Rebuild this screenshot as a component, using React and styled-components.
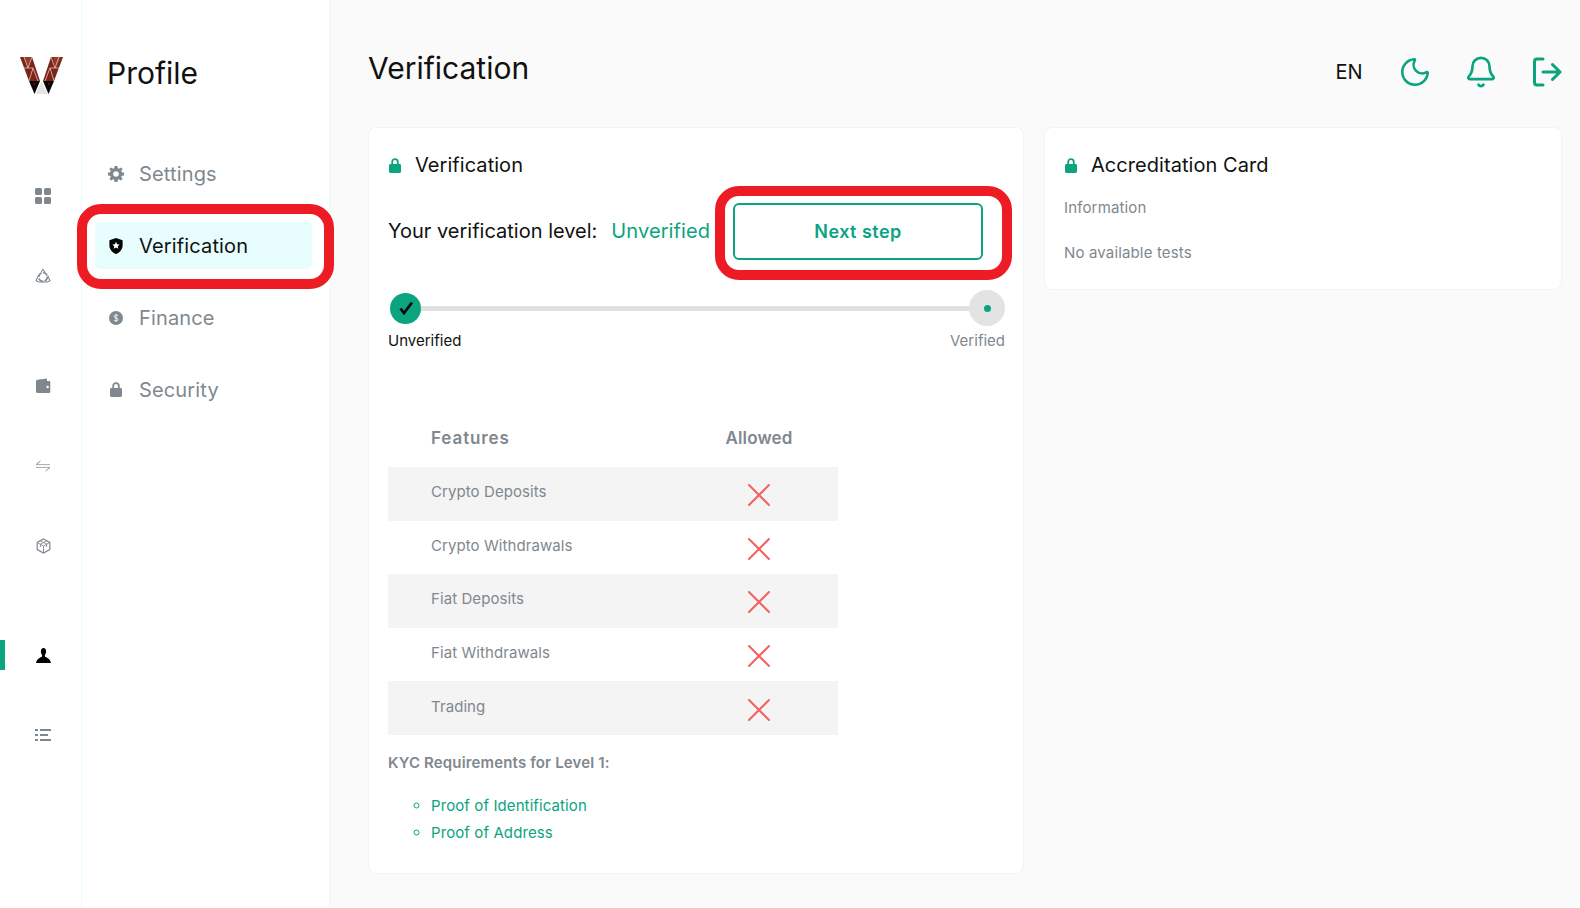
import React from 'react';
import styled, { createGlobalStyle } from 'styled-components';
import { Moon, Bell, X } from 'lucide-react';

const GREEN = '#0ba47f';
const GREY = '#80888f';
const RED = '#ed1c24';
const EDGE = '#e9fbfa';

const GlobalStyle = createGlobalStyle`
  html, body {
    margin: 0;
    padding: 0;
    height: 100%;
    overflow: hidden;
    background: #fafafa;
    font-family: Inter, "Noto Sans", Arial, sans-serif;
    color: #111;
  }
  * { box-sizing: border-box; }
`;

const Page = styled.div`
  display: flex;
  height: 908px;
  width: 1580px;
`;

const Rail = styled.aside`
  flex: 0 0 82px;
  background: #fff;
  border-right: 1px solid ${EDGE};
  display: flex;
  flex-direction: column;
  padding-top: 57px;
`;

const LogoBox = styled.div`
  padding-left: 20px;
  height: 124px;
`;

const RailGroups = styled.div`
  display: flex;
  flex-direction: column;
  gap: 79.5px;
`;

const RailGroup = styled.div`
  display: flex;
  flex-direction: column;
  gap: 50px;
`;

const RailItem = styled.div`
  position: relative;
  height: 30px;
  display: flex;
  align-items: center;
  justify-content: center;
  padding-left: 5px;
  color: ${(p) => (p.$active ? '#000' : GREY)};

  ${(p) =>
    p.$active &&
    `&::before {
      content: '';
      position: absolute;
      left: 0;
      top: 0;
      bottom: 0;
      width: 5px;
      background: ${GREEN};
    }`}
`;

const SubNav = styled.nav`
  flex: 0 0 248px;
  background: #fff;
  border-right: 1px solid ${EDGE};
  padding: 53px 17px 0 13px;
`;

const SubNavTitle = styled.h2`
  margin: 0 0 57px 12px;
  font-size: 30px;
  line-height: 40px;
  font-weight: 400;
  color: #111;
`;

const Menu = styled.div`
  display: flex;
  flex-direction: column;
  gap: 25px;
`;

const MenuItem = styled.a`
  position: relative;
  height: 47px;
  display: flex;
  align-items: center;
  gap: 15px;
  padding-left: 13px;
  border-radius: 5px;
  font-size: 20px;
  letter-spacing: 0.15px;
  color: ${(p) => (p.$active ? '#111' : GREY)};
  background: ${(p) => (p.$active ? '#e8fdfd' : 'transparent')};
`;

const MenuIcon = styled.span`
  flex: 0 0 16px;
  height: 16px;
  display: flex;
  align-items: center;
  justify-content: center;
`;

const Callout = styled.span`
  position: absolute;
  top: ${(p) => p.$top}px;
  left: ${(p) => p.$left}px;
  right: ${(p) => p.$right}px;
  bottom: ${(p) => p.$bottom}px;
  border: 10px solid ${RED};
  border-radius: 24px;
  pointer-events: none;
`;

const Main = styled.main`
  flex: 1;
  min-width: 0;
  padding: 0 18px 0 38px;
`;

const Header = styled.header`
  height: 127px;
  display: flex;
  justify-content: space-between;
  align-items: flex-start;
`;

const PageTitle = styled.h1`
  margin: 48px 0 0;
  font-size: 30px;
  line-height: 40px;
  font-weight: 400;
  color: #111;
`;

const Actions = styled.div`
  margin: 55px -2px 0 0;
  display: flex;
  gap: 32px;
`;

const ActionSlot = styled.button`
  width: 34px;
  height: 34px;
  padding: 0;
  border: 0;
  background: none;
  display: flex;
  align-items: center;
  justify-content: center;
  font: inherit;
  font-size: 20px;
  color: ${(p) => (p.$text ? '#111' : GREEN)};
`;

const Cards = styled.div`
  display: grid;
  grid-template-columns: 656px 518px;
  gap: 20px;
  align-items: start;
`;

const Card = styled.section`
  background: #fff;
  border: 1px solid #f3f3f3;
  border-radius: 8px;
  padding: 25px 18px 27px 19px;
`;

const CardTitle = styled.h3`
  margin: 0;
  display: flex;
  align-items: center;
  gap: 14px;
  height: 24px;
  font-size: 20px;
  font-weight: 400;
  letter-spacing: 0.05px;
  color: #111;
`;

const TitleLock = styled.span`
  display: flex;
  margin-left: 1px;
  color: ${GREEN};
`;

const LevelRow = styled.div`
  margin-top: 26px;
  display: flex;
  align-items: center;
  height: 57px;
  font-size: 20px;
`;

const LevelText = styled.span`
  margin-top: -2px;
`;

const LevelValue = styled.span`
  margin: -2px 0 0 14px;
  letter-spacing: 0.1px;
  color: ${GREEN};
`;

const NextButton = styled.button`
  position: relative;
  margin-left: auto;
  margin-right: 22px;
  width: 250px;
  height: 57px;
  background: #fff;
  border: 2px solid ${GREEN};
  border-radius: 6px;
  font: inherit;
  font-size: 18px;
  font-weight: 600;
  letter-spacing: 0.45px;
  color: ${GREEN};
`;

const Track = styled.div`
  margin: 30px 0 0 2px;
  display: flex;
  align-items: center;
  height: 36px;
`;

const TrackBar = styled.div`
  flex: 1;
  height: 5px;
  background: #e0e0e0;
`;

const StepDone = styled.span`
  flex: 0 0 31px;
  height: 31px;
  border-radius: 50%;
  background: ${GREEN};
  display: flex;
  align-items: center;
  justify-content: center;
`;

const StepNext = styled.span`
  flex: 0 0 36px;
  height: 36px;
  border-radius: 50%;
  background: #e3e3e3;
  display: flex;
  align-items: center;
  justify-content: center;

  &::after {
    content: '';
    width: 7px;
    height: 7px;
    border-radius: 50%;
    background: ${GREEN};
  }
`;

const StepLabels = styled.div`
  margin-top: 6px;
  display: flex;
  justify-content: space-between;
  font-size: 15px;
  line-height: 18px;
`;

const StepLabel = styled.span`
  color: ${(p) => (p.$muted ? GREY : '#111')};
`;

const FeatureTable = styled.div`
  margin-top: 70px;
  width: 450px;
`;

const FeatureHead = styled.div`
  display: grid;
  grid-template-columns: 292px 158px;
  align-items: center;
  height: 47px;
  padding-bottom: 11px;
  font-size: 17px;
  font-weight: 600;
  color: ${GREY};
`;

const FeatureRow = styled.div`
  display: grid;
  grid-template-columns: 292px 158px;
  align-items: center;
  height: 53.6px;
  background: ${(p) => (p.$shaded ? '#f4f4f4' : '#fff')};
  font-size: 15px;
  letter-spacing: 0.08px;
  color: ${GREY};
`;

const FeatureName = styled.span`
  padding: 0 0 4px 43px;
`;

const HeadCell = styled.span`
  padding-left: ${(p) => (p.$center ? 0 : 43)}px;
  text-align: ${(p) => (p.$center ? 'center' : 'left')};
  letter-spacing: ${(p) => (p.$center ? 0.15 : 0.9)}px;
`;

const DeniedCell = styled.span`
  display: flex;
  justify-content: center;
  padding-top: 3px;
  color: #f4615f;
`;

const KycTitle = styled.div`
  margin-top: 19px;
  font-size: 15px;
  line-height: 18px;
  font-weight: 600;
  letter-spacing: 0.15px;
  color: ${GREY};
`;

const KycList = styled.ul`
  margin: 20px 0 0;
  padding-left: 43px;
  list-style: circle;
`;

const KycItem = styled.li`
  height: 27px;
  line-height: 27px;
  font-size: 15px;
  letter-spacing: 0.1px;
  color: ${GREEN};
`;

const InfoLine = styled.div`
  margin-top: ${(p) => p.$gap}px;
  font-size: 15px;
  line-height: 18px;
  letter-spacing: 0.15px;
  color: ${GREY};
`;

const Logo = () => (
  <svg width="43" height="37" viewBox="0 0 43 37">
    <polygon points="0,0 12,0 20,24 9,24" fill="#7c2418" />
    <polygon points="31,0 43,0 34,24 23,24" fill="#7c2418" />
    <polygon points="4,0 12,0 8,11" fill="#9c3a28" />
    <polygon points="33,0 41,0 36,11" fill="#9c3a28" />
    <polygon points="9,24 20,24 14.5,37" fill="#0a0506" />
    <polygon points="23,24 34,24 28.5,37" fill="#0a0506" />
    <polygon points="21.5,25 15.5,37 27.5,37" fill="#e4e4e4" />
    <path d="M8 11 L4 0 M8 11 L12 0 M3.5 11 H13 M13 11 L9 24 M13 11 L18 24 M35 11 L31 0 M35 11 L39 0 M30 11 H39.5 M30 11 L25 24 M30 11 L34 24" stroke="#e8d8d4" strokeWidth="0.7" fill="none" />
    <circle cx="14" cy="27" r="0.7" fill="#c22" />
    <circle cx="29" cy="27" r="0.7" fill="#c22" />
  </svg>
);

const GridIcon = () => (
  <svg width="16" height="16" viewBox="0 0 16 16" fill="currentColor">
    <rect x="0" y="0" width="7" height="7" rx="1.5" />
    <rect x="9" y="0" width="7" height="7" rx="1.5" />
    <rect x="0" y="9" width="7" height="7" rx="1.5" />
    <rect x="9" y="9" width="7" height="7" rx="1.5" />
  </svg>
);

const RecycleIcon = () => (
  <svg width="16" height="16" viewBox="0 0 16 16" fill="none" stroke="currentColor" strokeWidth="1.1">
    <path d="M6 4.5 L8 1.2 L10 4.5" />
    <path d="M12.6 7.5 L15 12.8 L11.5 14.2" />
    <path d="M3.4 7.5 L1 12.8 L4.5 14.2" />
    <path d="M4.5 14 H11.5" />
    <circle cx="8" cy="9" r="4.3" strokeWidth="1.6" strokeDasharray="5 1.6" />
  </svg>
);

const WalletIcon = () => (
  <svg width="16" height="16" viewBox="0 0 16 16">
    <path d="M1 3.5 C1 2.5 1.6 2 2.5 1.8 L12 0.6 V3 H14 C14.8 3 15.3 3.5 15.3 4.3 V13.5 C15.3 14.4 14.8 15 14 15 H2.5 C1.6 15 1 14.4 1 13.5 Z" fill="currentColor" />
    <circle cx="12.6" cy="9" r="1.2" fill="#fff" />
  </svg>
);

const TransferIcon = () => (
  <svg width="16" height="16" viewBox="0 0 16 16" fill="none" stroke="currentColor">
    <path d="M1 6.6 H15" strokeWidth="1" opacity="0.7" />
    <path d="M1 9.4 H15" strokeWidth="1" opacity="0.7" />
    <path d="M1 6.6 L5.5 2.8" strokeWidth="0.9" />
    <path d="M15 9.4 L10.5 13.2" strokeWidth="0.9" />
  </svg>
);

const CubeIcon = () => (
  <svg width="15" height="16" viewBox="0 0 15 16" fill="none" stroke="currentColor" strokeWidth="1.2">
    <path d="M7.5 1 L13.8 4.4 V11.6 L7.5 15 L1.2 11.6 V4.4 Z" />
    <path d="M1.2 4.4 L7.5 8 L13.8 4.4 M7.5 8 V15 M4.4 2.8 L10.6 6.2 V9 M10.6 2.8 L4.4 6.2 V9" strokeWidth="0.9" />
  </svg>
);

const PersonIcon = () => (
  <svg width="15" height="15" viewBox="0 0 15 15" fill="currentColor">
    <path d="M7.5 0 C9.2 0 10.1 1.4 10.1 3.2 C10.1 4.8 9.6 6 8.9 6.9 C8.7 7.7 8.9 8.5 9.7 9 C11.4 10 13.9 10.6 15 15 H0 C1.1 10.6 3.6 10 5.3 9 C6.1 8.5 6.3 7.7 6.1 6.9 C5.4 6 4.9 4.8 4.9 3.2 C4.9 1.4 5.8 0 7.5 0 Z" />
  </svg>
);

const ListIcon = () => (
  <svg width="16" height="14" viewBox="0 0 16 14" fill="currentColor">
    <rect x="0" y="1" width="3" height="2" />
    <rect x="5" y="1" width="11" height="2" />
    <rect x="0" y="6" width="3" height="2" />
    <rect x="5" y="6" width="8" height="2" />
    <rect x="0" y="11" width="3" height="2" />
    <rect x="5" y="11" width="11" height="2" />
  </svg>
);

const GearIcon = () => (
  <svg width="16" height="16" viewBox="0 0 16 16" fill="currentColor">
    <path
      fillRule="evenodd"
      d="M6.6 0 H9.4 L9.8 2.2 L11 2.7 L12.9 1.4 L14.6 3.1 L13.3 5 L13.8 6.2 L16 6.6 V9.4 L13.8 9.8 L13.3 11 L14.6 12.9 L12.9 14.6 L11 13.3 L9.8 13.8 L9.4 16 H6.6 L6.2 13.8 L5 13.3 L3.1 14.6 L1.4 12.9 L2.7 11 L2.2 9.8 L0 9.4 V6.6 L2.2 6.2 L2.7 5 L1.4 3.1 L3.1 1.4 L5 2.7 L6.2 2.2 Z M8 5.2 A2.8 2.8 0 1 0 8 10.8 A2.8 2.8 0 1 0 8 5.2 Z"
    />
  </svg>
);

const ShieldIcon = () => (
  <svg width="14" height="16" viewBox="0 0 14 16">
    <path d="M7 0 L13.6 2.2 V7.5 C13.6 11.5 10.6 14.6 7 16 C3.4 14.6 0.4 11.5 0.4 7.5 V2.2 Z" fill="#050505" />
    <polygon points="7,3.8 8.1,6.2 10.6,6.5 8.8,8.2 9.3,10.8 7,9.5 4.7,10.8 5.2,8.2 3.4,6.5 5.9,6.2" fill="#fff" />
  </svg>
);

const DollarIcon = () => (
  <svg width="14" height="14" viewBox="0 0 14 14">
    <circle cx="7" cy="7" r="7" fill="currentColor" />
    <path d="M9 4.8 C8.6 4.2 7.8 4 7 4 C6 4 5.2 4.5 5.2 5.4 C5.2 7.2 9 6.6 9 8.5 C9 9.5 8 10 7 10 C6.2 10 5.4 9.7 5 9.1 M7 3 V11" stroke="#fff" strokeWidth="0.9" fill="none" />
  </svg>
);

const LockIcon = ({ w = 12, h = 15 }) => (
  <svg width={w} height={h} viewBox="0 0 12 15" fill="currentColor">
    <path d="M3.2 6.5 V4 C3.2 2.3 4.4 1.2 6 1.2 C7.6 1.2 8.8 2.3 8.8 4 V6.5" fill="none" stroke="currentColor" strokeWidth="1.8" />
    <rect x="0" y="6" width="12" height="9" rx="1.4" />
  </svg>
);

const LogoutIcon = () => (
  <svg width="30" height="30" viewBox="0 0 30 30" fill="none" stroke="currentColor" strokeWidth="3" strokeLinecap="round" strokeLinejoin="round">
    <path d="M11 2 H5 C3.3 2 2.5 2.9 2.5 4.5 V25.5 C2.5 27.1 3.3 28 5 28 H11" />
    <path d="M11 15 H28 M20.5 7.5 L28 15 L20.5 22.5" />
  </svg>
);

const CheckIcon = () => (
  <svg width="16" height="14" viewBox="0 0 16 14" fill="none" stroke="#0a0a0a" strokeWidth="2.8">
    <path d="M2.5 7.5 L6 12 L14 1.5" />
  </svg>
);

const menu = [
  { label: 'Settings', icon: <GearIcon /> },
  { label: 'Verification', icon: <ShieldIcon />, active: true },
  { label: 'Finance', icon: <DollarIcon /> },
  { label: 'Security', icon: <LockIcon /> },
];

const features = ['Crypto Deposits', 'Crypto Withdrawals', 'Fiat Deposits', 'Fiat Withdrawals', 'Trading'];

const App = () => (
  <>
    <GlobalStyle />
    <Page>
      <Rail>
        <LogoBox>
          <Logo />
        </LogoBox>
        <RailGroups>
          <RailGroup>
            <RailItem><GridIcon /></RailItem>
            <RailItem><RecycleIcon /></RailItem>
          </RailGroup>
          <RailGroup>
            <RailItem><WalletIcon /></RailItem>
            <RailItem><TransferIcon /></RailItem>
            <RailItem><CubeIcon /></RailItem>
          </RailGroup>
          <RailGroup>
            <RailItem $active><PersonIcon /></RailItem>
            <RailItem><ListIcon /></RailItem>
          </RailGroup>
        </RailGroups>
      </Rail>

      <SubNav>
        <SubNavTitle>Profile</SubNavTitle>
        <Menu>
          {menu.map((item) => (
            <MenuItem key={item.label} $active={item.active}>
              <MenuIcon>{item.icon}</MenuIcon>
              {item.label}
              {item.active && <Callout $top={-18} $left={-18} $right={-22} $bottom={-20} />}
            </MenuItem>
          ))}
        </Menu>
      </SubNav>

      <Main>
        <Header>
          <PageTitle>Verification</PageTitle>
          <Actions>
            <ActionSlot $text>EN</ActionSlot>
            <ActionSlot><Moon size={36} strokeWidth={1.8} /></ActionSlot>
            <ActionSlot><Bell size={34} strokeWidth={1.9} /></ActionSlot>
            <ActionSlot><LogoutIcon /></ActionSlot>
          </Actions>
        </Header>

        <Cards>
          <Card>
            <CardTitle>
              <TitleLock><LockIcon /></TitleLock>
              Verification
            </CardTitle>
            <LevelRow>
              <LevelText>Your verification level:</LevelText>
              <LevelValue>Unverified</LevelValue>
              <NextButton>
                Next step
                <Callout $top={-19} $left={-20} $right={-31} $bottom={-22} />
              </NextButton>
            </LevelRow>
            <Track>
              <StepDone><CheckIcon /></StepDone>
              <TrackBar />
              <StepNext />
            </Track>
            <StepLabels>
              <StepLabel>Unverified</StepLabel>
              <StepLabel $muted>Verified</StepLabel>
            </StepLabels>

            <FeatureTable>
              <FeatureHead>
                <HeadCell>Features</HeadCell>
                <HeadCell $center>Allowed</HeadCell>
              </FeatureHead>
              {features.map((name, i) => (
                <FeatureRow key={name} $shaded={i % 2 === 0}>
                  <FeatureName>{name}</FeatureName>
                  <DeniedCell><X size={40} strokeWidth={2} absoluteStrokeWidth /></DeniedCell>
                </FeatureRow>
              ))}
            </FeatureTable>

            <KycTitle>KYC Requirements for Level 1:</KycTitle>
            <KycList>
              <KycItem>Proof of Identification</KycItem>
              <KycItem>Proof of Address</KycItem>
            </KycList>
          </Card>

          <Card>
            <CardTitle>
              <TitleLock><LockIcon /></TitleLock>
              Accreditation Card
            </CardTitle>
            <InfoLine $gap={22}>Information</InfoLine>
            <InfoLine $gap={27}>No available tests</InfoLine>
          </Card>
        </Cards>
      </Main>
    </Page>
  </>
);

export default App;
